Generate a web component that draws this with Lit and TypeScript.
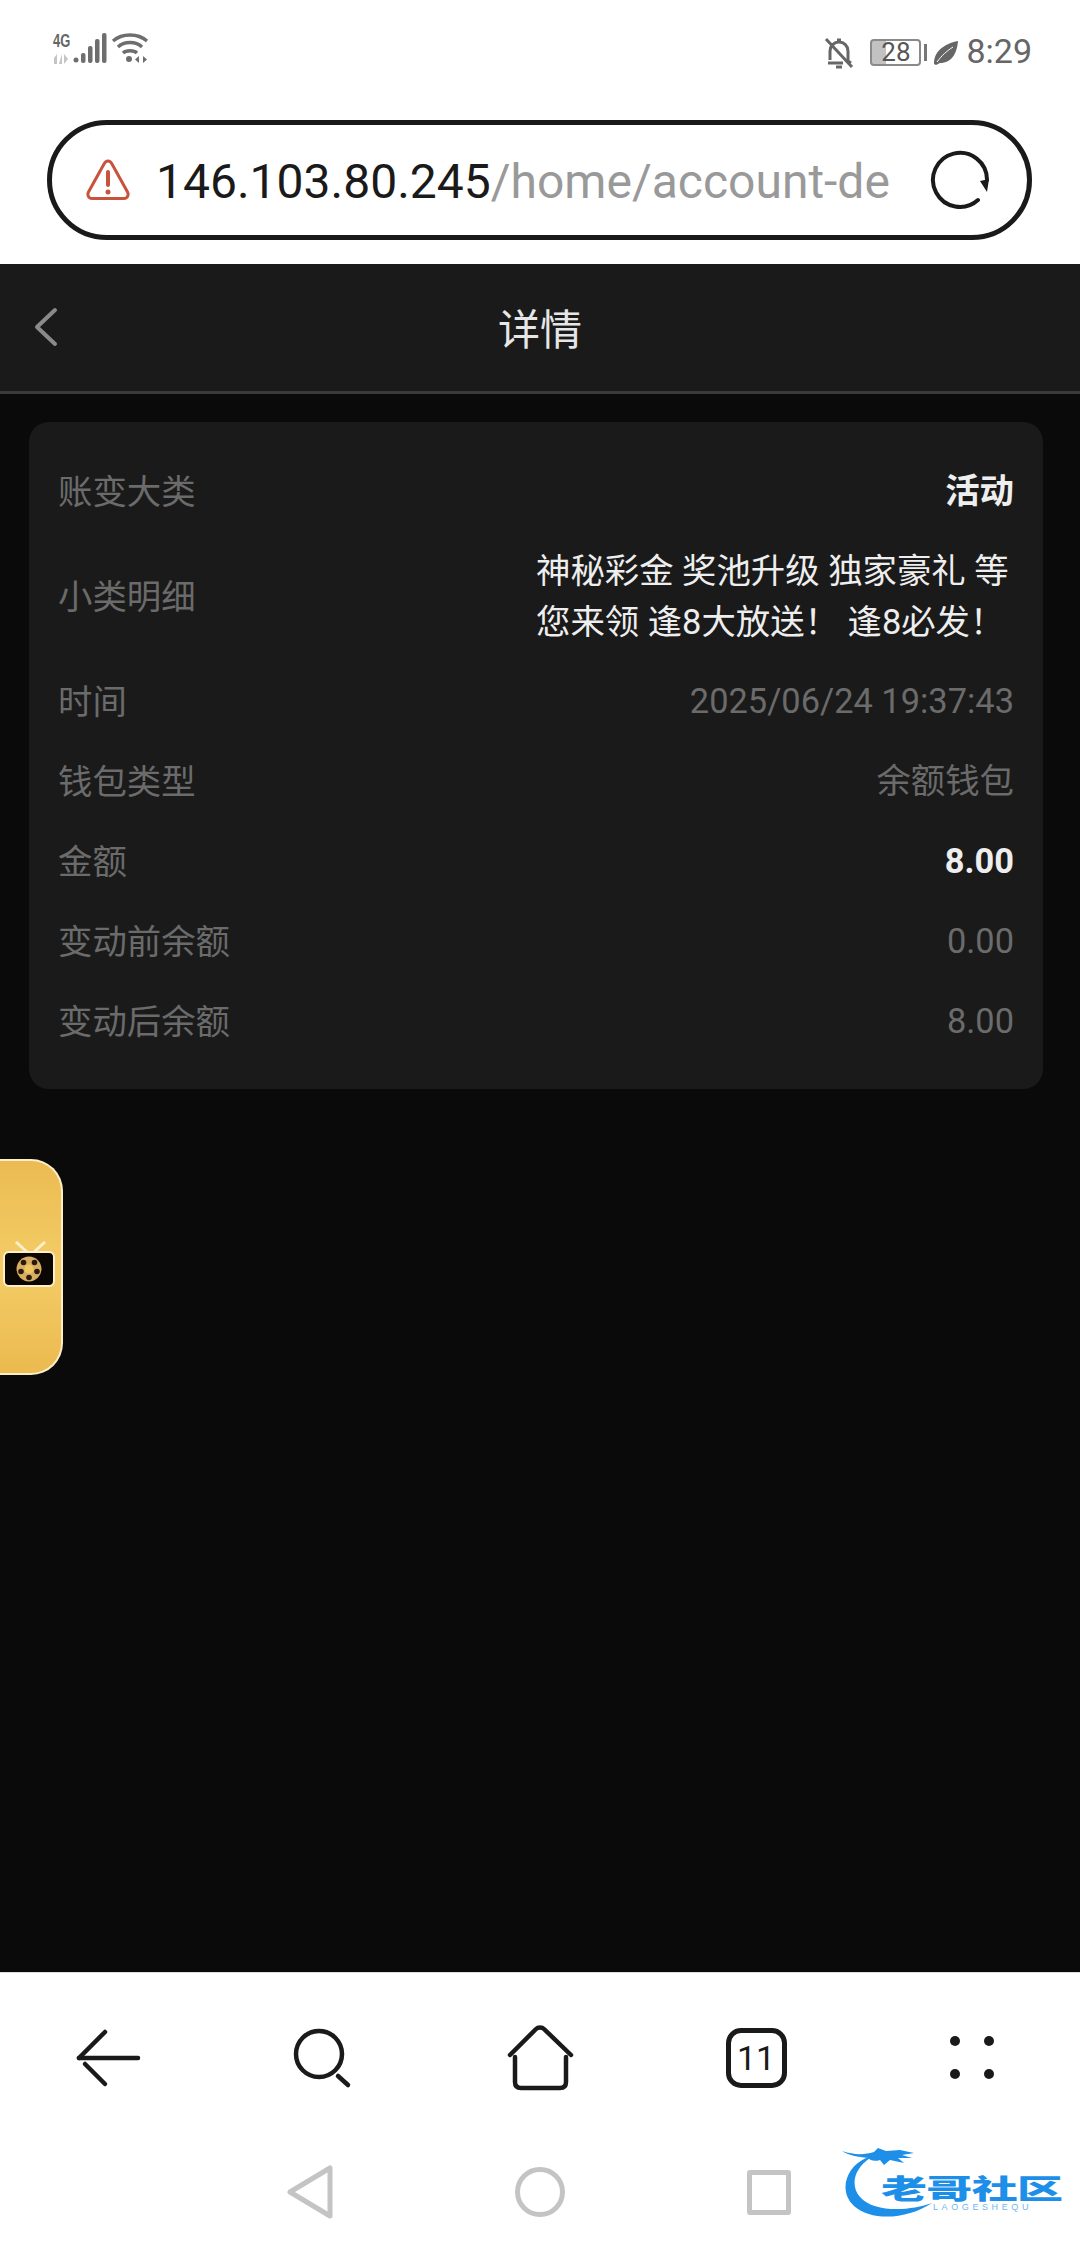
import { LitElement, html, css, svg } from 'lit';
import { customElement } from 'lit/decorators.js';
import { classMap } from 'lit/directives/class-map.js';

interface Row {
  label: string;
  value: string;
  strong?: boolean;
  long?: boolean;
}

const ROWS: Row[] = [
  { label: '账变大类', value: '活动', strong: true },
  { label: '小类明细', value: '神秘彩金 奖池升级 独家豪礼 等您来领 逢8大放送！ 逢8必发！', long: true },
  { label: '时间', value: '2025/06/24 19:37:43' },
  { label: '钱包类型', value: '余额钱包' },
  { label: '金额', value: '8.00', strong: true },
  { label: '变动前余额', value: '0.00' },
  { label: '变动后余额', value: '8.00' },
];

@customElement('app-root')
export class AppRoot extends LitElement {
  static styles = css`
    :host {
      display: block;
      font-family: Roboto, 'Noto Sans CJK SC', sans-serif;
    }
    .page {
      display: flex;
      flex-direction: column;
      height: 2244px;
      background: #fff;
      overflow: hidden;
      position: relative;
    }
    svg {
      display: block;
      flex: none;
    }

    /* status bar */
    .status {
      height: 120px;
      box-sizing: border-box;
      padding: 32px 48px 0 53px;
      display: flex;
      justify-content: space-between;
      align-items: flex-start;
      color: #666;
    }
    .status-left,
    .status-right {
      display: flex;
      align-items: center;
    }
    .status-left {
      gap: 2px;
    }
    .net {
      width: 18px;
      height: 32px;
      display: flex;
      flex-direction: column;
      align-items: center;
      justify-content: space-between;
    }
    .net span {
      font-family: 'Liberation Sans', sans-serif;
      font-weight: 700;
      font-size: 19px;
      line-height: 17px;
      transform: scaleX(0.68);
    }
    .battery {
      width: 51px;
      height: 27px;
      box-sizing: border-box;
      margin-left: 16px;
      border: 2px solid #8a8a8a;
      border-radius: 4px;
      display: flex;
      align-items: center;
      justify-content: center;
      font-size: 26px;
      line-height: 23px;
      color: #555;
      background: linear-gradient(90deg, #c2c2c2 0 14px, transparent 14px);
    }
    .battery-tip {
      width: 3px;
      height: 17px;
      margin-left: 3px;
      background: #777;
    }
    .time {
      font-size: 34px;
      line-height: 38px;
      margin: 0 0 3px 8px;
    }

    /* address bar */
    .address {
      height: 120px;
      box-sizing: border-box;
      margin: 0 48px 24px 47px;
      border: 5px solid #1a1a1a;
      border-radius: 60px;
      padding: 0 37px 0 34px;
      display: flex;
      align-items: center;
    }
    .url {
      margin-left: 26px;
      padding-top: 4px;
      font-size: 48px;
      line-height: 60px;
      white-space: nowrap;
      color: #999;
    }
    .url b {
      font-weight: 400;
      color: #1a1a1a;
    }
    .reload {
      margin-left: auto;
    }

    /* page header */
    .header {
      height: 130px;
      flex: none;
      box-sizing: border-box;
      background: #1a1a1a;
      border-bottom: 3px solid #3a3a3a;
      padding-bottom: 2px;
      display: flex;
      align-items: center;
      justify-content: center;
      position: relative;
    }
    .header h1 {
      margin: 0;
      font-size: 42px;
      font-weight: 400;
      color: #e6e6e6;
    }
    .header svg {
      position: absolute;
      left: 33px;
      top: 43px;
    }

    /* content */
    .content {
      flex: 1;
      background: #0a0a0a;
      padding: 28px 37px 0 29px;
      position: relative;
    }
    .card {
      background: #1a1a1a;
      border-radius: 20px;
      padding: 30px 29px 27px;
    }
    .row {
      min-height: 80px;
      display: flex;
      justify-content: space-between;
      align-items: center;
      font-size: 34.4px;
      line-height: 40px;
    }
    .row.long {
      min-height: 130px;
    }
    .label {
      color: #6b6b6b;
    }
    .value {
      color: #6b6b6b;
      text-align: right;
      padding-bottom: 2px;
    }
    .value.strong {
      color: #eee;
      font-weight: 700;
    }
    .value.long {
      width: 478px;
      color: #eee;
      text-align: left;
      line-height: 51px;
      padding-bottom: 0;
    }

    /* gold tab on the left edge */
    .side-tab {
      position: absolute;
      left: 0;
      top: 765px;
      width: 63px;
      height: 216px;
      box-sizing: border-box;
      border: 2px solid #fbeec8;
      border-left: none;
      border-radius: 0 32px 32px 0;
      background: linear-gradient(180deg, #ebbb52 0%, #f4cc66 50%, #ebba50 100%);
      display: flex;
      align-items: center;
    }

    /* browser toolbar */
    .toolbar {
      height: 170px;
      flex: none;
      box-sizing: border-box;
      border-top: 1px solid #ddd;
      display: grid;
      grid-template-columns: repeat(5, 216px);
      justify-items: center;
      align-items: center;
    }
    .tabs {
      width: 61px;
      height: 60px;
      box-sizing: border-box;
      border: 5px solid #1a1a1a;
      border-radius: 15px;
      display: flex;
      align-items: center;
      justify-content: center;
      font-size: 34px;
      color: #1a1a1a;
    }

    /* android nav */
    .sysnav {
      height: 102px;
      flex: none;
      box-sizing: border-box;
      display: flex;
      justify-content: center;
      align-items: center;
      gap: 182px;
      padding: 0 3px 2px 0;
    }
    .square {
      width: 44px;
      height: 45px;
      box-sizing: border-box;
      border: 5px solid #c4c4c4;
      border-radius: 3px;
    }
    .watermark {
      position: absolute;
      left: 840px;
      top: 2145px;
    }
    .watermark text {
      fill: #1e8fe8;
      font-family: 'Noto Sans CJK SC', sans-serif;
    }
    .watermark .sub {
      fill: #6fb6ee;
      font-family: 'Liberation Sans', sans-serif;
    }
  `;

  private signalIcon() {
    return html`<svg width="36" height="32" viewBox="0 0 36 32" fill="#6e6e6e">
      <circle cx="3" cy="28" r="2.5" />
      <rect x="8" y="21" width="4.5" height="10" rx="2" />
      <rect x="15" y="14" width="4.5" height="17" rx="2" />
      <rect x="22" y="7" width="4.5" height="24" rx="2" />
      <rect x="29" y="1" width="4.5" height="30" rx="2" />
    </svg>`;
  }

  private wifiIcon() {
    return html`<svg width="38" height="32" viewBox="0 0 38 32" fill="none" stroke="#6e6e6e" stroke-width="3.4">
      <path d="M2 9 C11 1 27 1 36 9" />
      <path d="M7 15 C13 9 25 9 31 15" />
      <path d="M12 21 C15 18 23 18 26 21" />
      <circle cx="18" cy="27" r="3" fill="#6e6e6e" stroke="none" />
      <path d="M28 24 L24 27.5 L28 31 Z M32 24 L36 27.5 L32 31 Z" fill="#6e6e6e" stroke="none" />
    </svg>`;
  }

  private bellIcon() {
    return html`<svg width="30" height="32" viewBox="0 0 30 32" fill="none" stroke="#666" stroke-width="3">
      <path d="M6 23 L6 14 C6 9 10 5 15 5 C20 5 24 9 24 14 L24 24 L27 26 M4 26 L19 26" />
      <path d="M13 3 L17 3" />
      <path d="M12 30 L18 30" />
      <path d="M2 2 L28 30" />
    </svg>`;
  }

  private leafIcon() {
    return html`<svg width="24" height="24" viewBox="0 0 24 24" style="margin-left:7px">
      <path d="M24 0 C23 12 18 22 6 22 L2 24 L0 23 C0 10 10 3 24 0 Z" fill="#666" />
      <path d="M3 21 C8 14 13 10 19 6" fill="none" stroke="#fff" stroke-width="1" />
    </svg>`;
  }

  private warnIcon() {
    return html`<svg width="44" height="42" viewBox="0 0 44 42" fill="none" stroke="#c9523d" stroke-width="3">
      <path d="M22 2 C20 2 19 3 18 5 L2.5 33 C1 36 2.5 39.5 6 39.5 L38 39.5 C41.500 39.5 43 36 41.500 33 L26 5 C25 3 24 2 22 2 Z" />
      <path d="M22 13 L22 26" stroke-width="4" stroke-linecap="round" />
      <circle cx="22" cy="33" r="2.500" fill="#c9523d" stroke="none" />
    </svg>`;
  }

  private reloadIcon() {
    return html`<svg class="reload" width="60" height="60" viewBox="0 0 60 60" fill="none">
      <path d="M48 50 A27 27 0 1 1 57 30" stroke="#1a1a1a" stroke-width="4" stroke-linecap="round" />
      <path d="M50 31 L59 29 L57 42 Z" fill="#1a1a1a" />
    </svg>`;
  }

  private tvIcon() {
    return html`<svg width="52" height="46" viewBox="0 0 52 46" style="margin:0 0 6px 3px">
      <path d="M13 1 L24 11 M42 1 L31 11" stroke="#fdf0c8" stroke-width="3" fill="none" />
      <rect x="1" y="11" width="50" height="34" rx="5" fill="#0a0705" stroke="#fdf0c8" stroke-width="2" />
      <circle cx="26" cy="28" r="12.500" fill="#d8ad63" />
      <circle cx="26" cy="28" r="4.500" fill="#f0c661" />
      <circle cx="26" cy="36.500" r="2.800" fill="#2a1a0c" />
      <circle cx="18" cy="30.500" r="2.800" fill="#2a1a0c" />
      <circle cx="34" cy="30.500" r="2.800" fill="#2a1a0c" />
      <circle cx="20.500" cy="21.500" r="2.800" fill="#2a1a0c" />
      <circle cx="31.500" cy="21.500" r="2.800" fill="#2a1a0c" />
    </svg>`;
  }

  private toolIcon(body: unknown) {
    return html`<svg width="70" height="70" viewBox="0 0 70 70" fill="none" stroke="#1a1a1a" stroke-width="4.5" stroke-linecap="round" stroke-linejoin="round">${body}</svg>`;
  }

  private renderRow(row: Row) {
    const cls = { strong: !!row.strong, long: !!row.long };
    return html`<div class="row ${classMap({ long: !!row.long })}">
      <span class="label">${row.label}</span>
      <span class="value ${classMap(cls)}">${row.value}</span>
    </div>`;
  }

  render() {
    return html`
      <div class="page">
        <div class="status">
          <div class="status-left">
            <div class="net">
              <span>4G</span>
              <svg width="18" height="10" viewBox="0 0 18 10" fill="#c4c4c4">
                <path d="M4 0 L4 10 L1 10 L1 4 Z M9 0 L9 10 L6 10 Z M11 0 L15 5 L11 10 Z" />
              </svg>
            </div>
            ${this.signalIcon()} ${this.wifiIcon()}
          </div>
          <div class="status-right">
            ${this.bellIcon()}
            <div class="battery">28</div>
            <div class="battery-tip"></div>
            ${this.leafIcon()}
            <span class="time">8:29</span>
          </div>
        </div>

        <div class="address">
          ${this.warnIcon()}
          <div class="url"><b>146.103.80.245</b>/home/account-de</div>
          ${this.reloadIcon()}
        </div>

        <div class="header">
          <svg width="26" height="40" viewBox="0 0 26 40" fill="none" stroke="#8a8a8a" stroke-width="4" stroke-linecap="round" stroke-linejoin="round">
            <path d="M22 3 L4 20 L22 37" />
          </svg>
          <h1>详情</h1>
        </div>

        <div class="content">
          <div class="card">${ROWS.map((r) => this.renderRow(r))}</div>
          <div class="side-tab">${this.tvIcon()}</div>
        </div>

        <div class="toolbar">
          ${this.toolIcon(svg`<path d="M6 35 L65 35" /><path d="M32 9 L6 35" /><path d="M12 41 L32 61" />`)}
          ${this.toolIcon(svg`<circle cx="30" cy="31" r="23" /><path d="M49 53 L59 62" />`)}
          ${this.toolIcon(svg`<path d="M5 32 L31 6 C33 4 37 4 39 6 L66 32" /><path d="M10 34 L10 59 C10 63 12 65 16 65 L55 65 C59 65 61 63 61 59 L61 34" />`)}
          <div class="tabs">11</div>
          ${this.toolIcon(svg`<g fill="#1a1a1a" stroke="none"><circle cx="18" cy="18" r="5" /><circle cx="52" cy="18" r="5" /><circle cx="18" cy="51" r="5" /><circle cx="52" cy="51" r="5" /></g>`)}
        </div>

        <div class="sysnav">
          <svg width="46" height="54" viewBox="0 0 46 54" fill="none" stroke="#c4c4c4" stroke-width="5" stroke-linejoin="round">
            <path d="M3 27 L43 3 L43 51 Z" />
          </svg>
          <svg width="50" height="50" viewBox="0 0 50 50" fill="none" stroke="#c4c4c4" stroke-width="5">
            <circle cx="25" cy="25" r="22.500" />
          </svg>
          <div class="square"></div>
        </div>

        <svg class="watermark" width="225" height="75" viewBox="0 0 225 75">
          <path d="M26 13 C6 22 -2 46 14 61 C32 77 68 74 92 58 C70 66 34 68 20 52 C10 40 14 24 30 13 Z" fill="#1e8fe8" />
          <path d="M2 6 C14 10 24 10 34 7 L38 3 L46 6 L60 5 L74 8 L62 10 L72 13 L58 13 L64 18 L50 15 L44 20 L40 15 C34 17 30 15 28 13 C18 12 8 10 2 6 Z" fill="#1e8fe8" />
          <text transform="translate(41 54) scale(1 0.6)" font-size="46" font-weight="900" textLength="182">老哥社区</text>
          <text class="sub" x="93" y="65" font-size="9" letter-spacing="3.600">LAOGESHEQU</text>
        </svg>
      </div>
    `;
  }
}
